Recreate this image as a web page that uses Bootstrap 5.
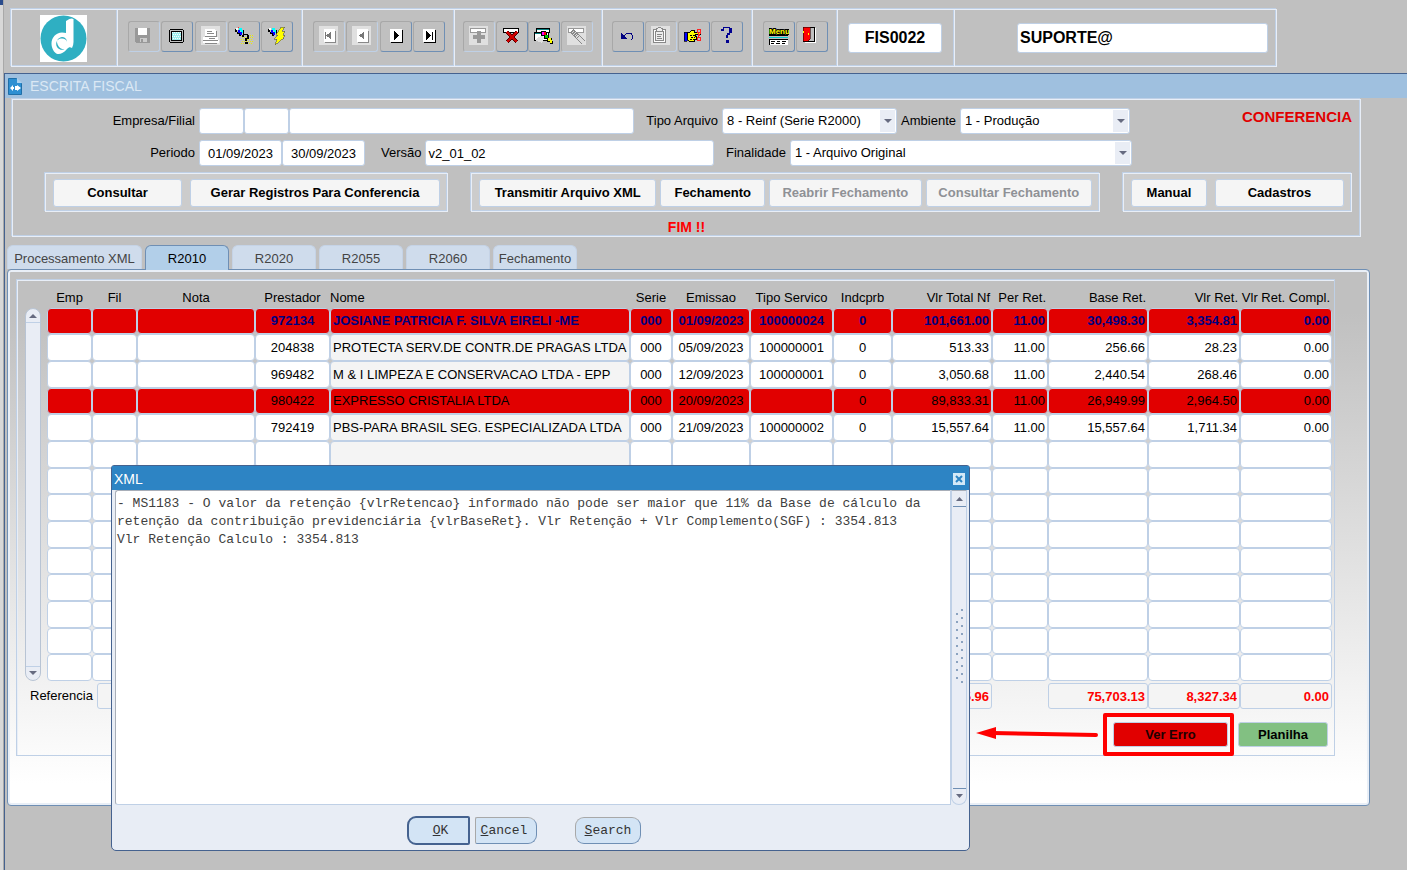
<!DOCTYPE html>
<html lang="pt-BR">
<head>
<meta charset="utf-8">
<meta name="viewport" content="width=device-width, initial-scale=1">
<title>Escrita Fiscal</title>
<link href="https://cdn.jsdelivr.net/npm/bootstrap@5.3.0/dist/css/bootstrap.min.css" rel="stylesheet">
<style>
:root{--line:#bfd0e6;--lite:#e8eef7;--deep:#45628f;--mid:#6f8fb4;--err:#e10000}
body{background:#c0c0c0;color:#000;font-family:"Liberation Sans",Arial,sans-serif;font-size:13px;line-height:18px}
.edge{width:4px;background:linear-gradient(#2a4c8c 5px,#d8d8d8 5px);border-right:1px solid #a9a9a9}
.app{min-width:0}
.frame-line{border:1px solid var(--lite);box-shadow:-1px -1px 0 var(--line),inset -1px -1px 0 var(--line)}
/* toolbar */
.toolbar{margin:9px 130px 0 7px;height:58px}
.tool-sec{border-right:1px solid var(--lite);box-shadow:inset -1px 0 0 var(--line);padding:0 9px 0 10px}
.tool-sec:last-child{border-right:0;box-shadow:none}
.sec-logo{width:106px;padding:0 12px 0 10px}.sec-a{width:185px}.sec-b{width:152px}.sec-c{width:148px;padding-left:8px}.sec-d{width:150px;padding-left:9px}.sec-e{width:85px}.sec-f{width:117px;padding-right:12px}
.tool{width:32px;height:31px;padding:4px 5px;border:1px solid #a8a8a8;border-right-color:var(--mid);border-bottom-color:var(--mid);border-radius:3px;background:#c0c0c0;line-height:0}
.tool:disabled{border-right-color:var(--line);border-bottom-color:var(--line)}
.tool svg{width:20px;height:20px;display:block}
/* fields */
.field{border:1px solid var(--line);border-radius:3px;background:#fff;color:#000;padding:0 2px;height:26px;font-size:13px;line-height:18px;min-width:0}
.big-field{height:30px;font-size:16px;font-weight:700}
.code-field{width:95px}
.user-field{width:251px}
select.field{appearance:none;padding-left:4px;background:#fff url("data:image/svg+xml,%3Csvg xmlns='http://www.w3.org/2000/svg' width='16' height='24'%3E%3Crect y='1' width='15' height='22' fill='%23e9edf5'/%3E%3Cpath d='M4 10h8L8 14z' fill='%23666b80'/%3E%3C/svg%3E") no-repeat right center}
.w-lab{width:182px}.w-sm{width:45px}.w-date{width:83px}.w-tipo{width:175px}.w-amb{width:170px}.w-fin{width:342px}.w-flag{width:222px}.w-tail{width:220px}
.flag{font-size:15px;color:var(--err)}
/* window */
.win{border-top:1px solid var(--deep);border-left:1px solid var(--deep);margin-top:6px}
.win-bar{background:#9fc0df;color:#dbe8f4;font-size:14px;height:24px;padding-left:3px}
.params{margin:1px 46px 0 7px;height:138px}
.row-two{margin-top:6px}
.row-acts{margin-top:7px}
.acts{background:#cccccc;border:1px solid var(--lite);box-shadow:-1px -1px 0 var(--line),inset -1px -1px 0 var(--line);height:39px;padding:0 7px;min-width:0}
.pbtn{height:28px;background:#f5f5f5;border:1px solid var(--line);border-radius:3px;font-weight:700;font-size:13px;padding:0;color:#000;white-space:nowrap}
.pbtn:disabled{color:#8f9196}
.g1{flex:1 1 403px}.g2{flex:1 1 629px;margin:0 23px}.g3{flex:1 1 229px}
.b128{flex:1 1 128px}.b249{flex:1 1 249px}.b178{flex:1 1 178px}.b105{flex:1 1 105px}.b153{flex:1 1 153px}.b167{flex:1 1 167px}.b77{flex:1 1 77px}.b131{flex:1 1 131px}
.msg{font-size:14px;color:#f00;margin-top:6px}
/* tabs */
.tabstrip{gap:3px;margin:8px 0 0 2px}
.tabstrip .nav-link{width:84px;height:24px;padding:4px 0 0;text-align:center;background:#cfdcec;border:1px solid #c5d3e6;border-bottom:0;border-radius:6px 6px 0 0;color:#444;white-space:nowrap}
.tabstrip .nav-link.wide{width:135px}
.tabstrip .nav-link.active{background:#b2cfe9;border-color:var(--mid);color:#000;margin-bottom:-1px;height:25px}
.sheet{margin:0 37px 0 2px;height:537px;border:1px solid var(--mid);border-radius:4px;box-shadow:inset 0 0 0 2px #e9eff7;background:linear-gradient(#c0c0c0 8%,#fff 96%);padding:9px 34px 49px 8px}
.sheet-in{border:1px solid var(--line);box-shadow:inset 1px 1px 0 var(--lite);padding:7px 2px 0 8px;height:100%}
/* grid */
.grid{border-collapse:separate;border-spacing:0;table-layout:fixed;width:100%}
.grid th{font-weight:400;height:21px;padding:0;white-space:nowrap;text-align:center}
.grid th.r{text-align:right;padding-right:2px}
.grid th.l{text-align:left}
.grid td{height:27px;padding:0 2px;border:1px solid var(--line);border-radius:4px;background:#fff;text-align:center;white-space:nowrap;overflow:hidden;line-height:18px}
.grid tr:nth-child(3n+1) td{height:26px}
.grid td.r{text-align:right}
.grid td.l{text-align:left;background:#f4f4f4}
.grid tr.bad td{background:var(--err)}
.grid tr.cur td{color:#000080;font-weight:700}
.sbar{width:16px;border:1px solid #b8c4d4;border-radius:8px;background:#e9edf5;margin:21px 6px 0 0}
.sbar svg{display:block}
.sum{background:#f4f4f4;color:#f00;font-weight:700;text-align:right}
.w100p{width:100px}.w92{width:92px}.gap56{width:56px}
.row-sum{padding:2px 0 0 5px}
.row-end{margin-top:13px}
.bsmall{height:25px}
.b-err{width:115px;background:var(--err);color:#200000}
.b-plan{width:90px;background:#82c082;margin-left:10px}
.mark-box{position:absolute;inset:-9px -6px -9px -10px;border:4px solid #f00;border-radius:2px;pointer-events:none}
.arrow-wrap{position:absolute;right:100%;top:0;margin-right:14px;line-height:0;pointer-events:none}
/* dialog */
.dlg{position:absolute;left:111px;top:465px;width:859px;height:386px;background:#e8edf5;border:1px solid var(--deep);border-radius:3px 3px 5px 5px;z-index:5}
.dlg-bar{height:24px;background:#2d84c4;color:#fff;font-size:14px;padding:1px 4px 0 2px}
.dlg-x{width:12px;height:12px;padding:0;border:0;background:#d3e8f7;line-height:0}
.dlg-main{padding:0 2px 0 3px}
.dlg-text{font-family:"Liberation Mono","Courier New",monospace;font-size:13px;line-height:18px;color:#404040;border:1px solid #a8aeb8;border-bottom-color:var(--line);border-right-color:var(--line);border-radius:3px 0 0 3px;padding:4px 1px;resize:none;overflow:hidden;background:#fff;outline:0}
.dlg-sb{width:16px;background:#e9edf5;border:1px solid var(--line);border-top-color:#a8aeb8;border-radius:0 0 8px 8px}
.dbtn{font-family:"Liberation Mono","Courier New",monospace;font-size:13px;line-height:18px;color:#333;background:#d3e4f5;border:1px solid var(--mid);border-top-color:#a8a8a8;border-left-color:#a8a8a8;height:27px;padding:2px 0 0}
.dlg-foot{height:45px;padding:5px 0 0 295px}
.ok{width:63px;height:29px;border:2px solid var(--deep);border-radius:9px 2px 2px 9px;padding-left:4px}
.cancel{width:62px;border-radius:2px 9px 9px 2px;padding-right:4px;margin-left:5px}
.search{width:66px;border-radius:9px;margin-left:38px}
</style>
</head>
<body class="d-flex min-vh-100 position-relative">
<div class="edge flex-shrink-0"></div>
<main class="app flex-grow-1 d-flex flex-column">
  <header class="toolbar frame-line d-flex align-items-stretch">
    <div class="tool-sec sec-logo d-flex align-items-center justify-content-center">
      <svg width="47" height="47" viewBox="0 0 47 47" role="img" aria-label="Logo"><path fill="#fff" d="M0 0h47v47H0z"/><circle cx="23.500" cy="23.500" r="23" fill="#2fafc2"/><path fill="#fff" d="M26 6C30 3 32 3 33.500 4v23c0 2-.5 4-1.500 6-2-1-3-1-5 1-3 4-7 5.500-9.500 5C14 38 11.500 33 11.500 28.500c0-6 4.500-11 10.500-11 1.500 0 3 .2 4 .6z"/><path fill="#2fafc2" d="M27 27a5 5 0 1 0-9.500 2.200c1 3 3.500 5 7 5.300-3 .9-6 0-7.500-2.500-2-4 0-8 4-8.500 3-.5 5.500 1 6 3.500z"/></svg>
    </div>
    <div class="tool-sec sec-a d-flex align-items-center justify-content-between pb-1">
      <button class="tool" disabled aria-label="Salvar"><svg viewBox="0 0 20 20" shape-rendering="crispEdges"><path fill="#999" d="M1 2h15v15H2l-1-1z"/><path fill="#fff" d="M4 2h9v7H4z"/><path fill="#ccc" d="M6 12h7v4H6z"/><path fill="#999" d="M7 13h2v3H7z"/></svg></button>
      <button class="tool" aria-label="Tela"><svg viewBox="0 0 20 20" shape-rendering="crispEdges"><path fill="#000" d="M3 3h13v1h1v12h-1v1H3v-1H2V4h1z"/><path fill="#c0c0c0" d="M3 4h13v12H3z"/><path fill="#000" d="M4 5h11v10H4z"/><path fill="#a0f0f0" d="M5 6h9v8H5z"/><path fill="#fff" d="M5 6h1v1H5zM7 6h1v1H7zM9 6h1v1H9zM11 6h1v1h-1zM13 6h1v1h-1zM6 8h1v1H6zM8 8h1v1H8zM10 8h1v1h-1zM12 8h1v1h-1zM5 10h1v1H5zM7 10h1v1H7zM9 10h1v1H9zM11 10h1v1h-1zM13 10h1v1h-1zM6 12h1v1H6zM8 12h1v1H8zM10 12h1v1h-1zM12 12h1v1h-1z"/></svg></button>
      <button class="tool" disabled aria-label="Imprimir"><svg viewBox="0 0 20 20" shape-rendering="crispEdges"><path fill="#e0e0e0" d="M0 0h19v19H0z"/><path fill="#fff" d="M4 3h9l2 2v5H4zM2 11h15v3h1v3H2z"/><path stroke="#888" fill="none" d="M6 5.500h5M6 7.500h7M4 10.500h12M2 14.500h15M4 17.500h12M15.500 5v5M8 12.500h6"/></svg></button>
      <button class="tool" aria-label="Entrar consulta"><svg viewBox="0 0 20 20" shape-rendering="crispEdges"><path fill="#000" d="M1 3h2v3H1zM3 6h3v2H3zM5 8h2v2H5zM9 4h1v5H9z"/><path fill="#0ff" d="M5 2h3v2h1v3H7V5H5z"/><path fill="#00f" d="M4 4h2v2h2v3H6V7H4z"/><path fill="#fff" d="M2 2h2v2H2z"/><path fill="#f33" d="M4 1h1v1H4z"/><path stroke="#ee0" stroke-dasharray="1 1" d="M8 11.500h11M7 13.500h11M8 15.500h11M7 17.500h11M14 9.500h5"/><path fill="#000" d="M9 8h5v1h1v4h-2v2h-2v-3h2V9h-3v2H8V9h1zM11 16h3v2h-3z"/></svg></button>
      <button class="tool" aria-label="Executar consulta"><svg viewBox="0 0 20 20" shape-rendering="crispEdges"><path fill="#000" d="M1 3h2v3H1zM3 6h3v2H3zM5 8h2v2H5zM9 4h1v5H9z"/><path fill="#0ff" d="M5 2h3v2h1v3H7V5H5z"/><path fill="#00f" d="M4 4h2v2h2v3H6V7H4z"/><path fill="#fff" d="M2 2h2v2H2z"/><path fill="#ff0" stroke="#555" stroke-width=".6" d="M14 1h4l-3 4h3l-2 4h2l-2 3h1l-9 7 2-6H7l4-4H9z"/></svg></button>
    </div>
    <div class="tool-sec sec-b d-flex align-items-center justify-content-between pb-1">
      <button class="tool" disabled aria-label="Primeiro"><svg viewBox="0 0 20 20" shape-rendering="crispEdges"><path fill="#e0e0e0" d="M0 0h19v19H0z"/><path fill="#888" d="M6 5h11v12H6z"/><path fill="#fff" d="M5 3h11v13H5z"/><path fill="#777" d="M6 6h1v7H6zM7 9.500l5-4v8z"/></svg></button>
      <button class="tool" disabled aria-label="Anterior"><svg viewBox="0 0 20 20" shape-rendering="crispEdges"><path fill="#e0e0e0" d="M0 0h19v19H0z"/><path fill="#888" d="M6 5h11v12H6z"/><path fill="#fff" d="M5 3h11v13H5z"/><path fill="#777" d="M7 9.500l5-4v8z"/></svg></button>
      <button class="tool" aria-label="Próximo"><svg viewBox="0 0 20 20" shape-rendering="crispEdges"><path fill="#000" d="M5 4h12v13H5z"/><path fill="#fff" d="M4 3h12v13H4z"/><path fill="#000" d="M8 5l5 4.500-5 4.500z"/></svg></button>
      <button class="tool" aria-label="Último"><svg viewBox="0 0 20 20" shape-rendering="crispEdges"><path fill="#000" d="M5 4h12v13H5z"/><path fill="#fff" d="M4 3h12v13H4z"/><path fill="#000" d="M7 5l5 4.500-5 4.500zM13 6h1v8h-1z"/></svg></button>
    </div>
    <div class="tool-sec sec-c d-flex align-items-center justify-content-between pb-1">
      <button class="tool" disabled aria-label="Inserir"><svg viewBox="0 0 20 20" shape-rendering="crispEdges"><path fill="#e0e0e0" d="M0 0h19v19H0z"/><path fill="#fff" stroke="#999" d="M1.500 2.500h15v4h-15z"/><path fill="#999" d="M8 5h4v4h4v4h-4v4H8v-4H4V9h4z"/></svg></button>
      <button class="tool" aria-label="Excluir"><svg viewBox="0 0 20 20" shape-rendering="crispEdges"><path fill="#fff" stroke="#000" d="M1.500 2.500h15v4h-15z"/><path stroke="#500" stroke-width="4" d="M5 6l10 10M15 6L5 16"/><path stroke="#d00000" stroke-width="2.500" d="M5 6l10 10M15 6L5 16"/></svg></button>
      <button class="tool" aria-label="Limpar registro"><svg viewBox="0 0 20 20" shape-rendering="crispEdges"><path fill="#fff" stroke="#000" d="M2.500 2.500h13v4h-13zM.5 6.500h14v8H.500z"/><path fill="#088080" d="M3 3h12v1H3zM1 7h10v1H1z"/><path fill="#e0e0e0" d="M1 14l7-5 2 3-2 5z"/><path fill="#000" d="M7 5h5v1h1v3h2v3h3v3h1v3h-3v-2h-3v-3h-3v-3H7z"/><path fill="#f0f" d="M8 6h3v3H8z"/><path fill="#f00" d="M10 6h2v3h-2z"/><path fill="#0c0" d="M11 9h3v3h-3z"/><path fill="#ff0" d="M14 12h3v2h1v3h-2v-2h-2z"/></svg></button>
      <button class="tool" disabled aria-label="Limpar bloco"><svg viewBox="0 0 20 20" shape-rendering="crispEdges"><path fill="#e0e0e0" d="M0 0h19v19H0z"/><path fill="#fff" stroke="#999" d="M1.500 2.500h15v4h-15z"/><path stroke="#888" stroke-width="5" d="M5 5l12 12"/><path stroke="#ddd" stroke-width="3" d="M5 5l12 12"/><path stroke="#888" stroke-dasharray="1 1" stroke-width="3" d="M5 5l7 7"/></svg></button>
    </div>
    <div class="tool-sec sec-d d-flex align-items-center justify-content-between pb-1">
      <button class="tool" aria-label="Desfazer"><svg viewBox="0 0 20 20" shape-rendering="crispEdges"><path stroke="#000080" fill="none" d="M5 10.500l4-3h4l1.500 2v3l-1.500 1"/><path fill="#000080" d="M3 7v6h6z"/></svg></button>
      <button class="tool" disabled aria-label="Colar"><svg viewBox="0 0 20 20" shape-rendering="crispEdges"><path fill="#e0e0e0" d="M0 0h19v19H0z"/><path fill="#fff" stroke="#888" d="M2.500 3.500h12v13h-12z"/><path fill="#eee" stroke="#888" d="M4.500 5.500h8v9h-8zM5.500 2.500h1l1-1h2l1 1h1v3h-6z"/><path stroke="#888" d="M6 8.500h5M6 10.500h4M6 12.500h5"/></svg></button>
      <button class="tool" aria-label="Lista de valores"><svg viewBox="0 0 20 20" shape-rendering="crispEdges"><path fill="#00f" stroke="#000" stroke-width=".7" d="M0 6h3v9H0z"/><path fill="#ff0" stroke="#000" d="M3.500 6.500h2l2-2h3v2h6v2h-5v2h1v3h-2v2h-5l-2-2z"/><path stroke="#000" stroke-dasharray="2 1" d="M6 9.500h5M7 11.500h4M6 13.500h4"/><path stroke="#f22" fill="none" d="M13.500 3.500h3v3h-3zM13.500 11.500h3v3h-3zM14 7l2 3M17 7l-3 4"/></svg></button>
      <button class="tool" aria-label="Ajuda"><svg viewBox="0 0 20 20" shape-rendering="crispEdges"><path fill="#000090" d="M6 1h7v1h2v5h-2v2h-2v3H9V9h1V7h2V2H7v3H4V3h2zM9 14h3v3H9z"/></svg></button>
    </div>
    <div class="tool-sec sec-e d-flex align-items-center justify-content-between pb-1">
      <button class="tool" aria-label="Menu"><svg viewBox="0 0 20 20"><g shape-rendering="crispEdges"><path fill="#000" d="M0 9h19v1H0z"/><path fill="#0cc" d="M0 11h19v1H0z"/><path fill="#fff" d="M0 13h19v6H0z"/><path stroke="#000" fill="none" d="M0 13.500h19M.5 13v6M2 15.500h4M8 15.500h3M13 15.500h4M2 17.500h3M7 17.500h4M13 17.500h3"/></g><text x="0" y="8" font-size="8" font-weight="700" fill="#ff0" stroke="#000" stroke-width="2" paint-order="stroke" font-family="Liberation Sans">Menu</text></svg></button>
      <button class="tool" aria-label="Sair"><svg viewBox="0 0 20 20" shape-rendering="crispEdges"><path fill="#c0c0c0" stroke="#000" d="M1.500 1.500h11v14h-11z"/><path fill="#fff" d="M13 2h1v15H3v-1h10z"/><path fill="#f00" stroke="#300" stroke-width=".6" d="M1 1h7v12l-2 2H1z"/><path fill="#ff0" d="M1 5h1v2H1zM6 7h1v2H6z"/></svg></button>
    </div>
    <div class="tool-sec sec-f d-flex align-items-center justify-content-center">
      <input class="field big-field code-field text-center" aria-label="Programa" value="FIS0022">
    </div>
    <div class="tool-sec flex-grow-1 d-flex align-items-center justify-content-end px-2">
      <input class="field big-field user-field" aria-label="Usuário" value="SUPORTE@">
    </div>
  </header>

  <section class="win flex-grow-1">
    <div class="win-bar d-flex align-items-center gap-2">
      <svg width="14" height="17" viewBox="0 0 14 17"><path fill="#2d8fd2" stroke="#1f6fa8" d="M.5.500h8l5 5v11H.500z"/><path fill="#a9d0ee" d="M9 0v5h5z"/><path fill="#fff" d="M2 10l3-3v2h1v2H5v2zM7 8h2V7l4 3-4 3v-1H7z"/></svg>
      <span>ESCRITA FISCAL</span>
    </div>

    <form class="params frame-line d-flex flex-column" onsubmit="return false">
      <div class="d-flex align-items-center mt-2 pe-2">
        <label class="w-lab text-end" for="emp">Empresa/Filial</label>
        <input id="emp" class="field w-sm ms-1"><input class="field w-sm" aria-label="Filial"><input class="field flex-grow-1" aria-label="Nome da empresa">
        <label class="ms-2 ps-1 me-1" for="tipo">Tipo Arquivo</label>
        <select id="tipo" class="field w-tipo"><option>8 - Reinf (Serie R2000)</option></select>
        <label class="ms-1 me-1" for="amb">Ambiente</label>
        <select id="amb" class="field w-amb"><option>1 - Produção</option></select>
        <strong class="flag w-flag text-end align-self-start">CONFERENCIA</strong>
      </div>
      <div class="row-two d-flex align-items-center pe-2">
        <label class="w-lab text-end" for="per">Periodo</label>
        <input id="per" class="field w-date text-center ms-1" value="01/09/2023"><input class="field w-date text-center" aria-label="Periodo final" value="30/09/2023">
        <label class="ms-3 me-1" for="ver">Versão</label>
        <input id="ver" class="field flex-grow-1" value="v2_01_02">
        <label class="ms-2 ps-1 me-1" for="fin">Finalidade</label>
        <select id="fin" class="field w-fin"><option>1 - Arquivo Original</option></select>
        <span class="w-tail"></span>
      </div>
      <div class="row-acts d-flex ps-4 pe-1">
        <div class="acts g1 d-flex align-items-center gap-2 ms-2">
          <button class="pbtn b128">Consultar</button><button class="pbtn b249">Gerar Registros Para Conferencia</button>
        </div>
        <div class="acts g2 d-flex align-items-center gap-1">
          <button class="pbtn b178">Transmitir Arquivo XML</button><button class="pbtn b105">Fechamento</button><button class="pbtn b153" disabled>Reabrir Fechamento</button><button class="pbtn b167" disabled>Consultar Fechamento</button>
        </div>
        <div class="acts g3 d-flex align-items-center gap-2 me-1">
          <button class="pbtn b77">Manual</button><button class="pbtn b131">Cadastros</button>
        </div>
      </div>
      <strong class="msg text-center">FIM !!</strong>
    </form>

    <nav class="tabstrip nav">
      <a class="nav-link wide" href="#">Processamento XML</a><a class="nav-link active" href="#">R2010</a><a class="nav-link" href="#">R2020</a><a class="nav-link" href="#">R2055</a><a class="nav-link" href="#">R2060</a><a class="nav-link" href="#">Fechamento</a>
    </nav>

    <div class="sheet">
      <div class="sheet-in">
        <div class="d-flex">
          <div class="sbar flex-shrink-0 d-flex flex-column justify-content-between">
            <svg width="14" height="15" viewBox="0 0 14 15"><path fill="#666b80" d="M3 9h8L7 5z"/><path stroke="#bfd0e6" d="M0 13.500h14"/></svg>
            <svg width="14" height="15" viewBox="0 0 14 15"><path fill="#666b80" d="M3 6h8l-4 4z"/><path stroke="#bfd0e6" d="M0 1.500h14"/></svg>
          </div>
          <table class="grid">
            <colgroup><col style="width:45px"><col style="width:45px"><col style="width:118px"><col style="width:75px"><col><col style="width:42px"><col style="width:78px"><col style="width:83px"><col style="width:59px"><col style="width:100px"><col style="width:56px"><col style="width:100px"><col style="width:92px"><col style="width:92px"></colgroup>
            <thead><tr><th>Emp</th><th>Fil</th><th>Nota</th><th>Prestador</th><th class="l">Nome</th><th>Serie</th><th>Emissao</th><th>Tipo Servico</th><th>Indcprb</th><th class="r">Vlr Total Nf</th><th class="r">Per Ret.</th><th class="r">Base Ret.</th><th class="r">Vlr Ret.</th><th class="r">Vlr Ret. Compl.</th></tr></thead>
            <tbody id="rows"></tbody>
          </table>
        </div>
        <div class="row-sum d-flex align-items-center">
          <label for="ref" class="me-1">Referencia</label>
          <input id="ref" class="field w100p sum">
          <span class="flex-grow-1"></span>
          <input class="field sum w100p" aria-label="Total Nf" value="210,615.96"><span class="gap56"></span><input class="field sum w100p" aria-label="Total base" value="75,703.13"><input class="field sum w92" aria-label="Total retido" value="8,327.34"><input class="field sum w92" aria-label="Total complemento" value="0.00">
        </div>
        <div class="row-end d-flex justify-content-end pe-1">
          <div class="position-relative d-flex">
            <span class="arrow-wrap"><svg width="124" height="24" viewBox="0 0 124 24"><path stroke="#f00" stroke-width="4" stroke-linecap="round" d="M18 11l103 2"/><path fill="#f00" d="M1 11l20-6v12z"/></svg></span>
            <button class="pbtn bsmall b-err">Ver Erro</button>
            <span class="mark-box"></span>
          </div>
          <button class="pbtn bsmall b-plan">Planilha</button>
        </div>
      </div>
    </div>
  </section>
</main>

<div class="dlg d-flex flex-column" role="dialog" aria-label="XML">
  <div class="dlg-bar d-flex align-items-center justify-content-between"><span>XML</span>
    <button class="dlg-x" aria-label="Fechar"><svg width="12" height="12" viewBox="0 0 12 12"><path stroke="#2d84c4" stroke-width="2" d="M3 3l6 6M9 3l-6 6"/></svg></button>
  </div>
  <div class="dlg-main d-flex flex-grow-1">
    <textarea class="dlg-text flex-grow-1" aria-label="Mensagem" spellcheck="false">- MS1183 - O valor da retenção {vlrRetencao} informado não pode ser maior que 11% da Base de cálculo da retenção da contribuição previdenciária {vlrBaseRet}. Vlr Retenção + Vlr Complemento(SGF) : 3354.813
Vlr Retenção Calculo : 3354.813</textarea>
    <div class="dlg-sb d-flex flex-column justify-content-between align-items-center">
      <svg width="13" height="16" viewBox="0 0 13 16"><path fill="#666b80" d="M3 10h7L6.500 6z"/><path stroke="#6f8fb4" d="M0 15.500h13"/></svg>
      <svg width="13" height="78" viewBox="0 0 13 78"><g stroke="#8ba3c0" stroke-width="2" stroke-dasharray="2 6"><path d="M4 4v72M9 0v76"/></g></svg>
      <svg width="13" height="16" viewBox="0 0 13 16"><path fill="#666b80" d="M3 6h7l-3.500 4z"/><path stroke="#6f8fb4" d="M0 .5h13"/></svg>
    </div>
  </div>
  <div class="dlg-foot d-flex align-items-center">
    <button class="dbtn ok"><u>O</u>K</button><button class="dbtn cancel"><u>C</u>ancel</button><button class="dbtn search"><u>S</u>earch</button>
  </div>
</div>
<script src="https://cdn.jsdelivr.net/npm/bootstrap@5.3.0/dist/js/bootstrap.bundle.min.js"></script>
<script>
const data = [
  ["bad cur","","","","972134","JOSIANE PATRICIA F. SILVA EIRELI -ME","000","01/09/2023","100000024","0","101,661.00","11.00","30,498.30","3,354.81","0.00"],
  ["","","","","204838","PROTECTA SERV.DE CONTR.DE PRAGAS LTDA","000","05/09/2023","100000001","0","513.33","11.00","256.66","28.23","0.00"],
  ["","","","","969482","M & I LIMPEZA E CONSERVACAO LTDA - EPP","000","12/09/2023","100000001","0","3,050.68","11.00","2,440.54","268.46","0.00"],
  ["bad","","","","980422","EXPRESSO CRISTALIA LTDA","000","20/09/2023","","0","89,833.31","11.00","26,949.99","2,964.50","0.00"],
  ["","","","","792419","PBS-PARA BRASIL SEG. ESPECIALIZADA LTDA","000","21/09/2023","100000002","0","15,557.64","11.00","15,557.64","1,711.34","0.00"]
];
const body = document.getElementById("rows");
for (let i = 0; i < 14; i++) {
  const rec = data[i] || Array(15).fill("");
  const tr = body.insertRow();
  tr.className = rec[0];
  for (let c = 1; c < 15; c++) {
    const td = tr.insertCell();
    td.textContent = rec[c];
    td.className = c === 5 ? "l" : c > 9 ? "r" : "";
  }
}
</script>
</body>
</html>
